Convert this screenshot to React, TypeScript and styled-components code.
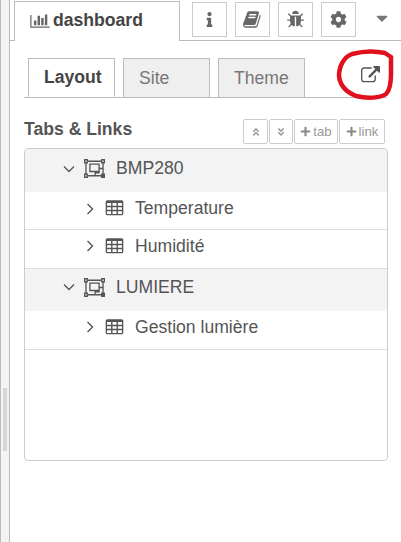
import React from "react";
import styled, { createGlobalStyle } from "styled-components";
import { FaInfo, FaCog, FaCaretDown, FaAngleDoubleUp, FaAngleDoubleDown, FaPlus } from "react-icons/fa";

const Global = createGlobalStyle`
  html, body { margin: 0; padding: 0; background: #fff; }
  body { font-family: "Liberation Sans", Arial, sans-serif; color: #555; overflow: hidden; }
`;

const Page = styled.div`
  position: relative;
  width: 401px;
  height: 542px;
  display: flex;
  overflow: hidden;
  background: #fff;
`;

const Separator = styled.div`
  width: 8px;
  height: 542px;
  flex: none;
  background: #f3f3f3;
  border-left: 1px solid #bbb;
  border-right: 1px solid #bbb;
  display: flex;
  justify-content: center;
  align-items: flex-start;
  padding-top: 388px;
  box-sizing: content-box;
`;

const Grip = styled.div`
  width: 4px;
  height: 63px;
  background: #d6d6d6;
`;

const Sidebar = styled.div`
  flex: 1;
  min-width: 0;
  display: flex;
  flex-direction: column;
`;

const Header = styled.div`
  height: 41px;
  flex: none;
  display: flex;
  align-items: flex-start;
  padding: 1px 0 0 4px;
  box-sizing: border-box;
  border-bottom: 1px solid #bbb;
`;

const MainTab = styled.div`
  width: 166px;
  height: 40px;
  box-sizing: border-box;
  background: #fff;
  border: 1px solid #bbb;
  border-bottom: none;
  display: flex;
  align-items: center;
  gap: 3px;
  padding: 0 0 2px 15px;
  font-size: 17.6px;
  font-weight: 700;
  color: #444;
`;

const HeaderButtons = styled.div`
  display: flex;
  gap: 8px;
  margin: 1px 0 0 12px;
`;

const HeaderButton = styled.div`
  width: 35px;
  height: 35px;
  box-sizing: border-box;
  border: 1px solid #ccc;
  display: flex;
  align-items: center;
  justify-content: center;
  color: #666;
`;

const HeaderCaret = styled.div`
  margin: 8px 0 0 17px;
  color: #777;
  line-height: 16px;
  height: 16px;
`;

const Body = styled.div`
  flex: 1;
  display: flex;
  flex-direction: column;
  padding: 17px 14px 0 14px;
`;

const TabBarBox = styled.div`
  position: relative;
`;

const TabBar = styled.div`
  height: 40px;
  display: flex;
  gap: 8px;
  padding-left: 4px;
  border-bottom: 1px solid #bbb;
  box-sizing: border-box;
  align-items: flex-start;
`;

const Tab = styled.div<{ $active?: boolean }>`
  width: 87px;
  height: 39px;
  margin-bottom: -1px;
  box-sizing: border-box;
  border: 1px solid #bbb;
  border-bottom: ${p => (p.$active ? "1px solid #fff" : "none")};
  background: ${p => (p.$active ? "#fff" : "#efefef")};
  color: ${p => (p.$active ? "#444" : "#777")};
  font-weight: ${p => (p.$active ? 700 : 400)};
  font-size: 17.6px;
  display: flex;
  align-items: center;
  padding: 0 0 0 15px;
`;

const PopoutButton = styled.div`
  position: absolute;
  top: 8px;
  left: 337px;
  line-height: 0;
`;

const SectionRow = styled.div`
  display: flex;
  justify-content: space-between;
  align-items: center;
  margin-top: 21px;
  height: 25px;
  padding-right: 2px;
`;

const SectionTitle = styled.div`
  font-size: 17.6px;
  font-weight: 700;
  color: #555;
  padding-bottom: 4px;
`;

const SmallButtons = styled.div`
  display: flex;
  gap: 1px;
`;

const SmallButton = styled.div<{ $w: number }>`
  width: ${p => p.$w}px;
  height: 25px;
  box-sizing: border-box;
  border: 1px solid #ccc;
  border-radius: 2px;
  display: flex;
  align-items: center;
  justify-content: center;
  gap: 2px;
  font-size: 13.2px;
  color: #999;
  svg { flex: none; }
`;

const List = styled.div`
  margin-top: 4px;
  height: 313px;
  width: 364px;
  box-sizing: border-box;
  border: 1px solid #ccc;
  border-radius: 4px;
  overflow: hidden;
  flex: none;
`;

const GroupRow = styled.div<{ $h: number; $pad: number }>`
  height: ${p => p.$h}px;
  box-sizing: border-box;
  background: #f3f3f3;
  display: flex;
  align-items: center;
  padding: 0 0 ${p => p.$pad}px 38px;
  font-size: 17.6px;
  color: #555;
`;

const ChildRow = styled.div<{ $h: number; $pad: number }>`
  height: ${p => p.$h}px;
  box-sizing: border-box;
  background: #fff;
  border-bottom: 1px solid #ddd;
  display: flex;
  align-items: center;
  padding: 0 0 ${p => p.$pad}px 61px;
  font-size: 17.6px;
  color: #555;
`;

const Chevron = styled.svg<{ $gap: number }>`
  flex: none;
  margin-right: ${p => p.$gap}px;
`;

const RowIcon = styled.svg<{ $gap: number }>`
  flex: none;
  margin-right: ${p => p.$gap}px;
`;

const Annotation = styled.svg`
  position: absolute;
  left: 330px;
  top: 44px;
  pointer-events: none;
`;

const ChartIcon = () => (
  <svg width="20" height="17" viewBox="0 0 2048 1792" fill="#666" style={{ flex: "none" }}>
    <path d="M640 896v512h-256v-512h256zm384-512v1024h-256v-1024h256zm1024 1152v128h-2048v-1344h128v1216h1920zm-640-896v768h-256v-768h256zm384-384v1152h-256v-1152h256z" />
  </svg>
);

const BookIcon = () => (
  <svg width="19" height="19" viewBox="0 0 1792 1792" fill="#666">
    <path d="M1639 478q40 57 18 129l-275 906q-19 64-76.5 107.5t-122.5 43.5h-923q-77 0-148.5-53.5t-99.5-131.5q-24-67-2-127 0-4 3-27t4-37q1-8-3-21.5t-3-19.5q2-11 8-21t16.5-23.5 16.5-23.5q23-38 45-91.5t30-91.5q3-10 .5-30t-.5-28q3-11 17-28t17-23q21-36 42-92t25-90q1-9-2.5-32t.5-28q4-13 22-30.5t22-22.5q19-26 42.5-84.5t27.5-96.5q1-8-3-25.5t-2-26.5q2-8 9-18t18-23 17-21q8-12 16.5-30.5t15-35 16-36 19.5-32 26.5-23.5 36-11.5 47.5 5.5l-1 3q38-9 51-9h761q74 0 114 56t18 130l-274 906q-36 119-71.5 153.5t-128.5 34.5h-869q-27 0-38 15-11 16-1 43 24 70 144 70h923q29 0 56-15.5t35-41.5l300-987q7-22 5-57 38 15 59 43zm-1064 2q-4 13 2 22.5t20 9.5h608q13 0 25.5-9.5t16.5-22.5l21-64q4-13-2-22.5t-20-9.5h-608q-13 0-25.5 9.5t-16.5 22.5zm-83 256q-4 13 2 22.5t20 9.5h608q13 0 25.5-9.5t16.5-22.5l21-64q4-13-2-22.5t-20-9.5h-608q-13 0-25.5 9.5t-16.5 22.5z" />
  </svg>
);

const BugIcon = () => (
  <svg width="19" height="19" viewBox="0 0 1792 1792" fill="#666">
    <path d="M1696 960q0 26-19 45t-45 19h-224q0 171-67 290l208 209q19 19 19 45t-19 45q-18 19-45 19t-45-19l-198-197q-5 5-15 13t-42 28.5-65 36.5-82 29-97 13v-896h-128v896q-51 0-101.5-13.5t-87-33-66-39-43.5-32.5l-15-14-183 207q-20 21-48 21-24 0-43-16-19-18-20.5-44.5t15.5-46.5l202-227q-58-114-58-274h-224q-26 0-45-19t-19-45 19-45 45-19h224v-294l-173-173q-19-19-19-45t19-45 45-19 45 19l173 173h844l173-173q19-19 45-19t45 19 19 45-19 45l-173 173v294h224q26 0 45 19t19 45zm-480-576h-640q0-133 93.5-226.5t226.5-93.5 226.5 93.5 93.5 226.5z" />
  </svg>
);

const ExternalIcon = () => (
  <svg width="19" height="19" viewBox="0 0 1792 1792" fill="#555">
    <path d="M1408 928v320q0 119-84.5 203.5t-203.5 84.5h-832q-119 0-203.5-84.5t-84.5-203.5v-832q0-119 84.5-203.5t203.5-84.5h704q14 0 23 9t9 23v64q0 14-9 23t-23 9h-704q-66 0-113 47t-47 113v832q0 66 47 113t113 47h832q66 0 113-47t47-113v-320q0-14 9-23t23-9h64q14 0 23 9t9 23zm384-864v512q0 26-19 45t-45 19-45-19l-176-176-652 652q-10 10-23 10t-23-10l-114-114q-10-10-10-23t10-23l652-652-176-176q-19-19-19-45t19-45 45-19h512q26 0 45 19t19 45z" />
  </svg>
);

const ObjectGroupIcon = () => (
  <RowIcon $gap={11} width="21" height="19" viewBox="0 192 2048 1664" preserveAspectRatio="none" fill="#555">
    <path d="M2048 576h-128v896h128v384h-384v-128h-1280v128h-384v-384h128v-896h-128v-384h384v128h1280v-128h384v384zm-256-256v128h128v-128h-128zm-1664 0v128h128v-128h-128zm128 1408v-128h-128v128h128zm1408-128v-128h128v-896h-128v-128h-1280v128h-128v896h128v128h1280zm256 128v-128h-128v128h128zm-384-768h384v768h-896v-384h-512v-768h1024v384zm-896 256h768v-512h-768v512zm1152 384v-512h-256v384h-384v128h640z" />
  </RowIcon>
);

const TableIcon = () => (
  <RowIcon $gap={11} width="19" height="19" viewBox="0 0 1792 1792" fill="#555">
    <path d="M576 1376v-192q0-14-9-23t-23-9h-320q-14 0-23 9t-9 23v192q0 14 9 23t23 9h320q14 0 23-9t9-23zm0-384v-192q0-14-9-23t-23-9h-320q-14 0-23 9t-9 23v192q0 14 9 23t23 9h320q14 0 23-9t9-23zm512 384v-192q0-14-9-23t-23-9h-320q-14 0-23 9t-9 23v192q0 14 9 23t23 9h320q14 0 23-9t9-23zm-512-768v-192q0-14-9-23t-23-9h-320q-14 0-23 9t-9 23v192q0 14 9 23t23 9h320q14 0 23-9t9-23zm512 384v-192q0-14-9-23t-23-9h-320q-14 0-23 9t-9 23v192q0 14 9 23t23 9h320q14 0 23-9t9-23zm512 384v-192q0-14-9-23t-23-9h-320q-14 0-23 9t-9 23v192q0 14 9 23t23 9h320q14 0 23-9t9-23zm-512-768v-192q0-14-9-23t-23-9h-320q-14 0-23 9t-9 23v192q0 14 9 23t23 9h320q14 0 23-9t9-23zm512 384v-192q0-14-9-23t-23-9h-320q-14 0-23 9t-9 23v192q0 14 9 23t23 9h320q14 0 23-9t9-23zm0-384v-192q0-14-9-23t-23-9h-320q-14 0-23 9t-9 23v192q0 14 9 23t23 9h320q14 0 23-9t9-23zm128-320v1088q0 66-47 113t-113 47h-1344q-66 0-113-47t-47-113v-1088q0-66 47-113t113-47h1344q66 0 113 47t47 113z" />
  </RowIcon>
);

const Down = () => (
  <Chevron $gap={9} width="12" height="8" viewBox="0 0 12 8" fill="none" stroke="#555" strokeWidth="1.3">
    <path d="M1 1.5L6 6.5L11 1.5" />
  </Chevron>
);

const Right = () => (
  <Chevron $gap={11} width="8" height="12" viewBox="0 0 8 12" fill="none" stroke="#555" strokeWidth="1.4">
    <path d="M1.5 1L6.5 6L1.5 11" />
  </Chevron>
);

const Group = ({ label, h, pad }: { label: string; h: number; pad: number }) => (
  <GroupRow $h={h} $pad={pad}>
    <Down />
    <ObjectGroupIcon />
    {label}
  </GroupRow>
);

const Child = ({ label, h, pad }: { label: string; h: number; pad: number }) => (
  <ChildRow $h={h} $pad={pad}>
    <Right />
    <TableIcon />
    {label}
  </ChildRow>
);

export default function App() {
  return (
    <Page>
      <Global />
      <Separator>
        <Grip />
      </Separator>
      <Sidebar>
        <Header>
          <MainTab>
            <ChartIcon />
            dashboard
          </MainTab>
          <HeaderButtons>
            <HeaderButton><FaInfo size={15} /></HeaderButton>
            <HeaderButton><BookIcon /></HeaderButton>
            <HeaderButton><BugIcon /></HeaderButton>
            <HeaderButton><FaCog size={17} /></HeaderButton>
          </HeaderButtons>
          <HeaderCaret><FaCaretDown size={18} /></HeaderCaret>
        </Header>
        <Body>
          <TabBarBox>
            <TabBar>
              <Tab $active>Layout</Tab>
              <Tab>Site</Tab>
              <Tab>Theme</Tab>
            </TabBar>
            <PopoutButton><ExternalIcon /></PopoutButton>
          </TabBarBox>
          <SectionRow>
            <SectionTitle>Tabs &amp; Links</SectionTitle>
            <SmallButtons>
              <SmallButton $w={25}><FaAngleDoubleUp size={10} /></SmallButton>
              <SmallButton $w={24}><FaAngleDoubleDown size={10} /></SmallButton>
              <SmallButton $w={44}><FaPlus size={11} color="#888" />tab</SmallButton>
              <SmallButton $w={46}><FaPlus size={11} color="#888" />link</SmallButton>
            </SmallButtons>
          </SectionRow>
          <List>
            <Group label="BMP280" h={43} pad={4} />
            <Child label="Temperature" h={38} pad={4} />
            <Child label="Humidité" h={39} pad={6} />
            <Group label="LUMIERE" h={42} pad={6} />
            <Child label="Gestion lumière" h={39} pad={6} />
          </List>
        </Body>
      </Sidebar>
      <Annotation width="71" height="60" viewBox="0 0 71 60" fill="none">
        <path
          d="M61 13L55 9C46 7 33 7 22 10C14 13 9 22 9 32C10 42 16 48 26 52C38 55 50 54 56 50C60 46 61 38 61 30V13"
          stroke="#e0111c"
          strokeWidth="4.5"
          strokeLinecap="round"
          strokeLinejoin="round"
        />
      </Annotation>
    </Page>
  );
}
